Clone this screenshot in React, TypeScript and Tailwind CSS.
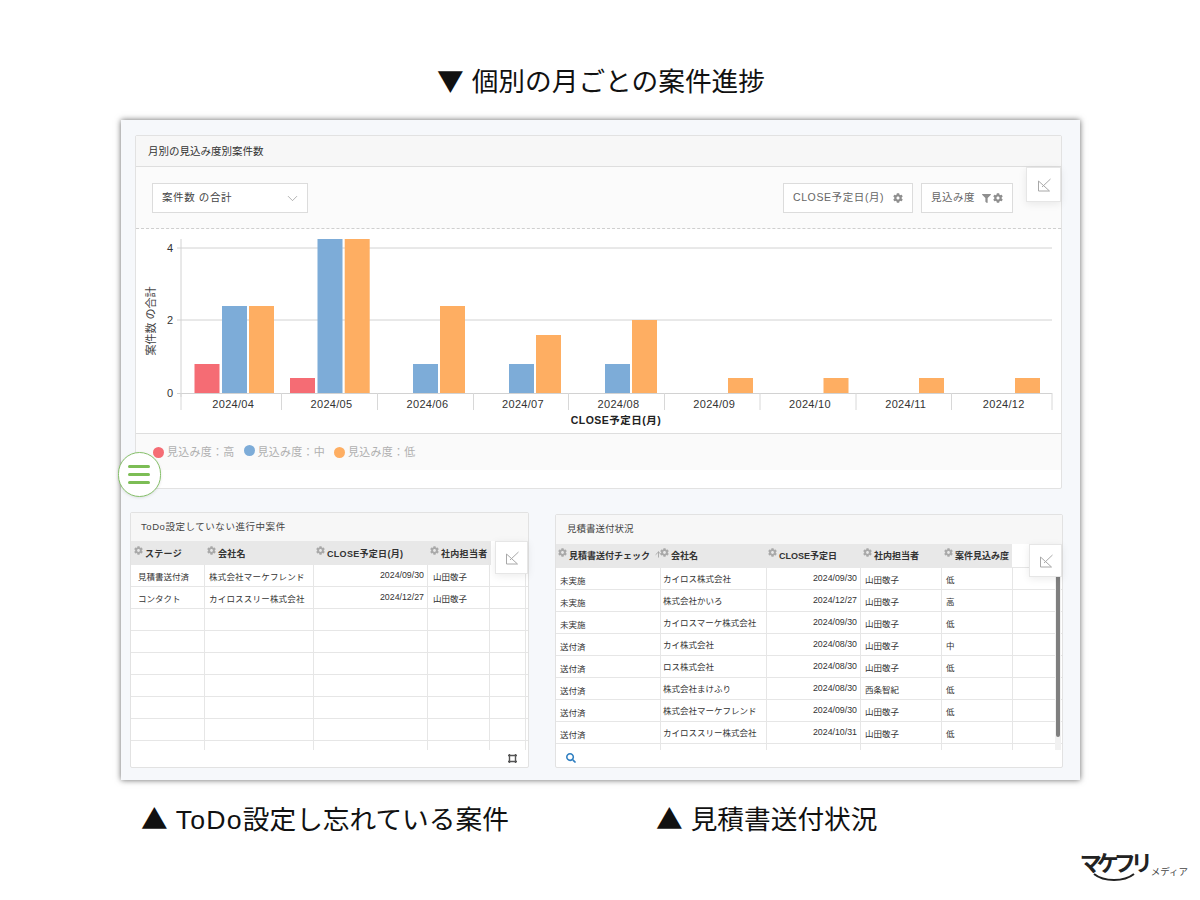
import { FaCog, FaFilter, FaSearch } from "react-icons/fa"
import { ArrowUp, ChevronDown } from "lucide-react"

const font = "[font-family:'Liberation_Sans','Noto_Sans_CJK_JP',sans-serif]"
const titleFont = "[font-family:'Noto_Sans_CJK_JP','Liberation_Sans',sans-serif]"

const bars = [
  { x: 194.5, top: 364, c: "#f56c74" },
  { x: 222, top: 306, c: "#7dacd8" },
  { x: 249, top: 306, c: "#feae62" },
  { x: 290, top: 378, c: "#f56c74" },
  { x: 317.5, top: 239, c: "#7dacd8" },
  { x: 344.7, top: 239, c: "#feae62" },
  { x: 413, top: 364, c: "#7dacd8" },
  { x: 440, top: 306, c: "#feae62" },
  { x: 509, top: 364, c: "#7dacd8" },
  { x: 536, top: 335, c: "#feae62" },
  { x: 605, top: 364, c: "#7dacd8" },
  { x: 632, top: 320, c: "#feae62" },
  { x: 728, top: 378, c: "#feae62" },
  { x: 823.5, top: 378, c: "#feae62" },
  { x: 919, top: 378, c: "#feae62" },
  { x: 1015, top: 378, c: "#feae62" },
]
const ticks = [181, 281.5, 377.5, 473.5, 568.5, 664.5, 760, 856, 951.5, 1052]
const months = ["2024/04", "2024/05", "2024/06", "2024/07", "2024/08", "2024/09", "2024/10", "2024/11", "2024/12"]

const todoRows = [
  ["見積書送付済", "株式会社マーケフレンド", "2024/09/30", "山田敬子"],
  ["コンタクト", "カイロススリー株式会社", "2024/12/27", "山田敬子"],
  ["", "", "", ""],
  ["", "", "", ""],
  ["", "", "", ""],
  ["", "", "", ""],
  ["", "", "", ""],
  ["", "", "", ""],
  ["", "", "", ""],
]

const quoteRows = [
  ["未実施", "カイロス株式会社", "2024/09/30", "山田敬子", "低"],
  ["未実施", "株式会社かいろ", "2024/12/27", "山田敬子", "高"],
  ["未実施", "カイロスマーケ株式会社", "2024/09/30", "山田敬子", "低"],
  ["送付済", "カイ株式会社", "2024/08/30", "山田敬子", "中"],
  ["送付済", "ロス株式会社", "2024/08/30", "山田敬子", "低"],
  ["送付済", "株式会社まけふり", "2024/08/30", "西条智紀", "低"],
  ["送付済", "株式会社マーケフレンド", "2024/09/30", "山田敬子", "低"],
  ["送付済", "カイロススリー株式会社", "2024/10/31", "山田敬子", "低"],
  ["", "", "", "", ""],
]

function ExpandButton({ className }: { className: string }) {
  return (
    <div className={`absolute flex items-center justify-center bg-white border border-[#e6e6e6] shadow-[0_2px_8px_rgba(0,0,0,0.08)] ${className}`}>
      <svg width="14" height="14" viewBox="0 0 14 14" fill="none" stroke="#a8a8a8" strokeWidth="1">
        <path d="M1.5 3v10h11L1.5 3M13.5 1L5 9" />
      </svg>
    </div>
  )
}

function Chart() {
  return (
    <svg width="925" height="204" viewBox="136 229 925 204" className="block">
      {[248, 320].map(y => (
        <line key={y} x1="177" x2="1052" y1={y} y2={y} stroke="#d2d2d2" />
      ))}
      <line x1="181" x2="181" y1="239" y2="397" stroke="#d2d2d2" />
      <line x1="177" x2="1052" y1="393.5" y2="393.5" stroke="#d2d2d2" />
      {ticks.map(x => (
        <line key={x} x1={x} x2={x} y1="393" y2="410" stroke="#d8d8d8" />
      ))}
      {bars.map(b => (
        <rect key={b.x} x={b.x} y={b.top} width="25" height={393 - b.top} fill={b.c} />
      ))}
      {[["4", 252], ["2", 324], ["0", 397]].map(([t, y]) => (
        <text key={t} x="170" y={y} fontSize="11" fill="#333" textAnchor="middle">{t}</text>
      ))}
      {months.map((m, i) => (
        <text key={m} x={(ticks[i] + ticks[i + 1]) / 2 + 2} y="408" fontSize="11" letterSpacing="0.3" fill="#333" textAnchor="middle">{m}</text>
      ))}
      <text x="616" y="424" fontSize="10.5" fontWeight="700" letterSpacing="0.5" fill="#222" textAnchor="middle">CLOSE予定日(月)</text>
      <text x="0" y="0" transform="translate(155 321) rotate(-90)" fontSize="11" fill="#444" textAnchor="middle">案件数 の合計</text>
    </svg>
  )
}

function HeaderCell({ label, className, arrow }: { label: string; className: string; arrow?: boolean }) {
  return (
    <div className={`flex items-start gap-[2px] text-[9px] font-bold text-[#333] shrink-0 ${className}`}>
      <FaCog className="mt-[-1px] text-[#a9a9a9] shrink-0" size={9} />
      <span className="leading-[14px] whitespace-nowrap">{label}</span>
      {arrow && <ArrowUp size={9} strokeWidth={2} className="ml-[2px] mt-[1px] text-[#999] shrink-0" />}
    </div>
  )
}

function TodoTable() {
  return (
    <div className="h-[209px] overflow-hidden">
      <div className="flex h-[24px] w-[360px] bg-[#e8e8e8] tracking-[0.3px]">
        <HeaderCell label="ステージ" className="w-[74px] pl-[3px] pt-[6px]" />
        <HeaderCell label="会社名" className="w-[109px] pl-[2px] pt-[6px]" />
        <HeaderCell label="CLOSE予定日(月)" className="w-[114px] pl-[2px] pt-[6px]" />
        <HeaderCell label="社内担当者" className="w-[62px] pl-[2px] pt-[6px]" />
      </div>
      {todoRows.map((r, i) => (
        <div key={i} className="flex h-[22px] border-b border-[#e6e6e6] text-[8.5px] text-[#333] bg-white">
          <div className="w-[74px] pl-[7px] leading-[24px] border-r border-[#e6e6e6] whitespace-nowrap">{r[0]}</div>
          <div className="w-[109px] pl-[4px] leading-[24px] border-r border-[#e6e6e6] whitespace-nowrap tracking-[0.2px]">{r[1]}</div>
          <div className="w-[114px] pr-[3px] leading-[20px] text-[8.8px] text-right border-r border-[#e6e6e6]">{r[2]}</div>
          <div className="w-[62px] pl-[5px] leading-[24px] border-r border-[#e6e6e6]">{r[3]}</div>
          <div className="w-[36px] border-r border-[#e6e6e6]" />
        </div>
      ))}
    </div>
  )
}

function QuoteTable() {
  return (
    <div className="h-[206px] overflow-hidden relative">
      <div className="h-[24px] border-b border-[#e6e6e6]">
        <div className="flex h-[24px] w-[456px] bg-[#e8e8e8]">
          <HeaderCell label="見積書送付チェック" arrow className="w-[104px] pl-[2px] pt-[5px]" />
          <HeaderCell label="会社名" className="w-[107px] pt-[5px]" />
          <HeaderCell label="CLOSE予定日" className="w-[94px] pl-[1px] pt-[5px]" />
          <HeaderCell label="社内担当者" className="w-[81px] pl-[2px] pt-[5px]" />
          <HeaderCell label="案件見込み度" className="w-[70px] pl-[2px] pt-[5px]" />
        </div>
      </div>
      {quoteRows.map((r, i) => (
        <div key={i} className="flex h-[22px] border-b border-[#e6e6e6] text-[8.5px] text-[#333] bg-white">
          <div className="w-[105px] pl-[4px] pt-[1px] leading-[24px] border-r border-[#e6e6e6]">{r[0]}</div>
          <div className="w-[106px] pl-[2px] leading-[22px] border-r border-[#e6e6e6] whitespace-nowrap">{r[1]}</div>
          <div className="w-[94px] pr-[3px] leading-[20px] text-[8.8px] text-right border-r border-[#e6e6e6]">{r[2]}</div>
          <div className="w-[81px] pl-[4px] leading-[24px] border-r border-[#e6e6e6]">{r[3]}</div>
          <div className="w-[71px] pl-[4px] leading-[24px] border-r border-[#e6e6e6]">{r[4]}</div>
        </div>
      ))}
      <div className="absolute right-[1px] top-[30px] bottom-0 w-[6px] bg-[#f1f1f1]">
        <div className="w-[4px] h-[163px] ml-[1px] bg-[#7f7f7f] rounded-[2px]" />
      </div>
    </div>
  )
}

export default function App() {
  return (
    <div className={`w-[1200px] h-[900px] bg-white overflow-hidden relative ${font}`}>
      <h1 className={`pt-[61px] h-[120px] pl-[437px] text-[26.7px] leading-[38px] [word-spacing:2px] text-[#111] whitespace-nowrap ${titleFont}`}>▼ 個別の月ごとの案件進捗</h1>

      <div className="relative ml-[121px] w-[959px] h-[660px] bg-[#f6f8fb] shadow-[0_0_6px_rgba(0,0,0,0.6)] pt-[15px]">
        {/* top chart panel */}
        <div className="relative ml-[14px] w-[927px] h-[354px] bg-white border border-[#e2e2e2] rounded-[2px]">
          <div className="h-[31px] px-[12px] bg-[#f7f7f7] border-b border-[#dedede] text-[10.5px] leading-[30px] text-[#333]">月別の見込み度別案件数</div>
          <div className="h-[62px] flex items-start justify-between pt-[16px] pl-[16px] pr-[48px] bg-[#fbfbfb] border-b border-dashed border-[#cfcfcf]">
            <div className="w-[156px] h-[30px] pl-[9px] pr-[6px] flex items-center justify-between bg-white border border-[#dcdcdc] text-[10.5px] tracking-[0.6px] text-[#444]">
              案件数 の合計
              <ChevronDown size={17} strokeWidth={0.9} className="text-[#888]" />
            </div>
            <div className="flex gap-[8px]">
              <div className="w-[130px] h-[30px] pl-[9px] flex items-center gap-[9px] bg-white border border-[#dcdcdc] text-[10.5px] tracking-[0.6px] text-[#666]">
                CLOSE予定日(月)
                <FaCog size={10} className="text-[#8f8f8f]" />
              </div>
              <div className="w-[92px] h-[30px] pl-[9px] flex items-center bg-white border border-[#dcdcdc] text-[10.5px] tracking-[0.5px] text-[#666]">
                見込み度
                <FaFilter size={9} className="ml-[7px] text-[#8f8f8f]" />
                <FaCog size={10} className="ml-[2px] text-[#8f8f8f]" />
              </div>
            </div>
          </div>
          <Chart />
          <div className="h-[37px] pl-[17px] flex items-center gap-[9px] bg-[#fafafa] border-t border-[#dedede] text-[11px] tracking-[0.25px] text-[#b0b0b0]">
            <span className="flex items-center gap-[3px]"><i className="w-[11px] h-[11px] rounded-full bg-[#f56c74]" />見込み度：高</span>
            <span className="flex items-center gap-[3px]"><i className="w-[11px] h-[11px] mt-[-3px] rounded-full bg-[#7dacd8]" />見込み度：中</span>
            <span className="flex items-center gap-[3px]"><i className="w-[11px] h-[11px] rounded-full bg-[#feae62]" />見込み度：低</span>
          </div>
          <ExpandButton className="right-0 top-[31px] w-[35px] h-[35px]" />
        </div>

        {/* hamburger */}
        <div className="absolute left-[-3px] top-[332px] w-[43px] h-[45px] pr-[2px] rounded-full bg-white border border-[#86c06a] flex flex-col items-center justify-center gap-[5px] shadow-[0_1px_3px_rgba(0,0,0,0.1)]">
          <i className="w-[22px] h-[3px] rounded-full bg-[#7cbd55]" />
          <i className="w-[22px] h-[3px] rounded-full bg-[#7cbd55]" />
          <i className="w-[22px] h-[3px] rounded-full bg-[#7cbd55]" />
        </div>

        <div className="flex items-start mt-[23px] ml-[9px]">
          {/* todo panel */}
          <div className="relative w-[399px] h-[256px] bg-white border border-[#e2e2e2] rounded-[2px]">
            <div className="h-[28px] px-[10px] bg-[#f7f7f7] text-[9.5px] tracking-[0.55px] leading-[27px] text-[#444]">ToDo設定していない進行中案件</div>
            <TodoTable />
            <div className="h-[17px] pr-[11px] flex items-center justify-end">
              <svg width="9" height="9" viewBox="0 0 9 9" fill="none" stroke="#555" strokeWidth="1.4">
                <path d="M0 1.5h9M0 7.5h9M1.5 0v9M7.5 0v9" />
              </svg>
            </div>
            <ExpandButton className="right-0 top-[28px] w-[33px] h-[33px]" />
          </div>
          {/* quote panel */}
          <div className="relative ml-[26px] mt-[2px] w-[508px] h-[254px] bg-white border border-[#e2e2e2] rounded-[2px]">
            <div className="h-[29px] px-[11px] bg-[#f7f7f7] text-[9.5px] leading-[28px] text-[#444]">見積書送付状況</div>
            <QuoteTable />
            <div className="h-[16px] pl-[10px] flex items-center">
              <FaSearch size={10} className="text-[#2f7fc1]" />
            </div>
            <ExpandButton className="right-0 top-[29px] w-[33px] h-[33px]" />
          </div>
        </div>
      </div>

      <div className={`flex pt-[19px] text-[26.7px] leading-[38px] [word-spacing:2px] text-[#111] whitespace-nowrap ${titleFont}`}>
        <span className="ml-[141px] w-[515px]">▲ <span className="[font-family:'Liberation_Sans',sans-serif] tracking-[1.2px]">ToDo</span>設定し忘れている案件</span>
        <span>▲ 見積書送付状況</span>
      </div>

      <div className={`flex justify-end items-end pr-[12px] mt-[10px] ${titleFont}`}>
        <div className="flex flex-col items-center w-[66px]">
          <span className="text-[22px] leading-[24px] font-bold tracking-[-5px] text-[#222] whitespace-nowrap">マケフリ</span>
          <svg width="42" height="8" viewBox="0 0 42 8" fill="none" stroke="#222" strokeWidth="2">
            <path d="M1 1c10 8 30 8 40 0" />
          </svg>
        </div>
        <span className="ml-[4px] mb-[4px] text-[9.5px] leading-[12px] text-[#444] whitespace-nowrap">メディア</span>
      </div>
    </div>
  )
}
